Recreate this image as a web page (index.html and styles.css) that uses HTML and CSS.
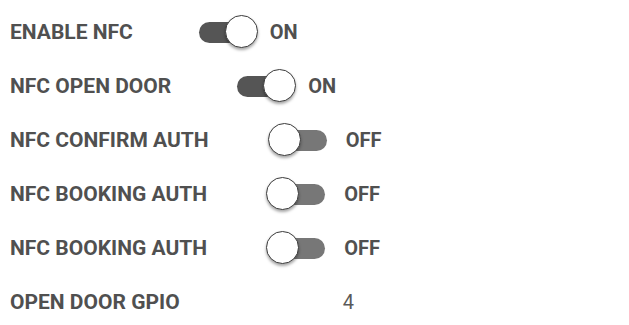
FILE: index.html
```html
<!DOCTYPE html>
<html>
<head>
<meta charset="utf-8">
<link rel="stylesheet" href="styles.css">
</head>
<body>
<div class="settings">
  <div class="row">
    <span class="label">ENABLE NFC</span>
    <span class="switch on"><span class="track"></span><span class="knob"></span></span>
    <span class="state">ON</span>
  </div>
  <div class="row">
    <span class="label">NFC OPEN DOOR</span>
    <span class="switch on"><span class="track"></span><span class="knob"></span></span>
    <span class="state">ON</span>
  </div>
  <div class="row">
    <span class="label">NFC CONFIRM AUTH</span>
    <span class="switch off"><span class="track"></span><span class="knob"></span></span>
    <span class="state">OFF</span>
  </div>
  <div class="row">
    <span class="label">NFC BOOKING AUTH</span>
    <span class="switch off"><span class="track"></span><span class="knob"></span></span>
    <span class="state">OFF</span>
  </div>
  <div class="row">
    <span class="label">NFC BOOKING AUTH</span>
    <span class="switch off"><span class="track"></span><span class="knob"></span></span>
    <span class="state">OFF</span>
  </div>
  <div class="row">
    <span class="label">OPEN DOOR GPIO</span>
    <span class="value">4</span>
  </div>
</div>
</body>
</html>
```
FILE: styles.css
```css
html, body {
  margin: 0;
  padding: 0;
  background: #ffffff;
}
.settings {
  display: flex;
  flex-direction: column;
  padding: 5px 0 0 10px;
  font-family: Roboto, "Liberation Sans", sans-serif;
  color: #505050;
}
.row {
  display: flex;
  align-items: center;
  height: 54px;
}
.label {
  font-size: 21px;
  font-weight: 700;
}
.switch {
  position: relative;
  width: 64px;
  height: 34px;
  margin-left: 61px;
  flex: none;
}
.switch.off {
  margin-left: 59px;
}
.track {
  position: absolute;
  left: 5px;
  right: 5px;
  top: 7px;
  height: 21px;
  border-radius: 11px;
  background: #555555;
}
.switch.off .track {
  background: #777777;
}
.knob {
  position: absolute;
  top: 0;
  width: 31px;
  height: 31px;
  border-radius: 50%;
  background: #ffffff;
  border: 1.5px solid #3c3c3c;
  box-shadow: 0 2px 3px rgba(0,0,0,0.35);
}
.switch.on .knob { right: 0; }
.switch.off .knob { left: 0; }
.state {
  margin-left: 12px;
  font-size: 20px;
  font-weight: 700;
}
.switch.off + .state {
  margin-left: 14px;
}
.value {
  margin-left: 163px;
  font-size: 20px;
  font-weight: 400;
  color: #5a5a5a;
}
```
